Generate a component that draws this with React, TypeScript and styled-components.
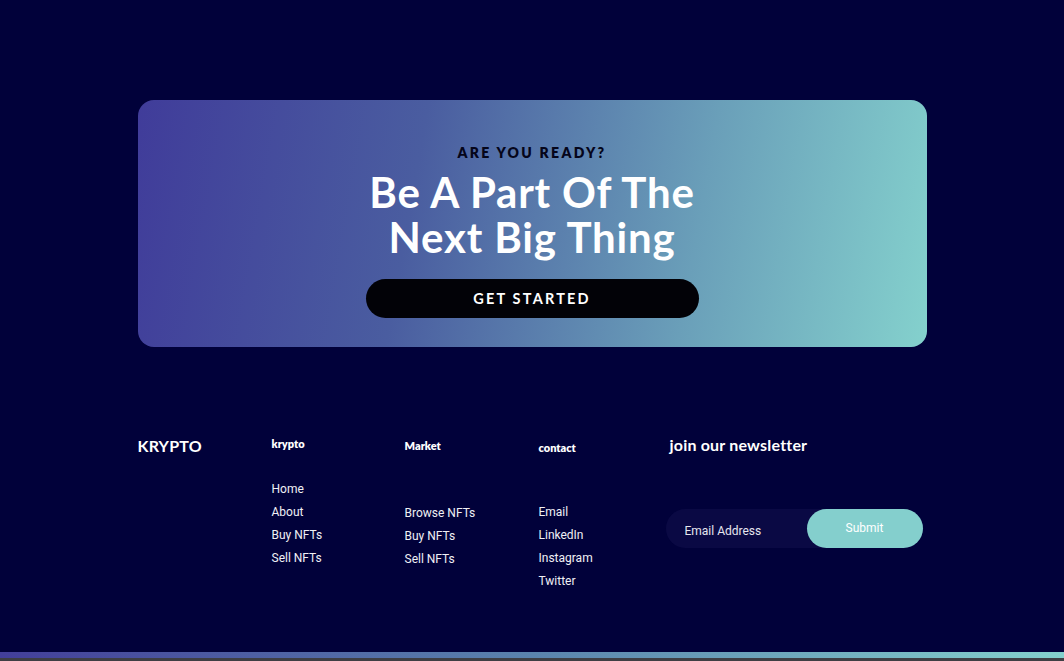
import React from "react";
import styled, { createGlobalStyle } from "styled-components";

const Global = createGlobalStyle`
  html, body { margin: 0; padding: 0; background: #01013a; }
  body { font-family: Roboto, "Liberation Sans", sans-serif; overflow: hidden; }
  * { box-sizing: border-box; }
`;

const Page = styled.div`
  width: 1064px;
  height: 661px;
  display: flex;
  flex-direction: column;
  background: #01013a;
`;

const Main = styled.main`
  flex: 1;
  width: 789px;
  margin: 0 auto;
  padding-top: 100px;
  display: flex;
  flex-direction: column;
`;

const Banner = styled.section`
  height: 247px;
  border-radius: 16px;
  background: linear-gradient(100deg, #403c9a 0%, #4a5da0 35%, #6a9fb9 70%, #84d1cd 100%);
  display: flex;
  flex-direction: column;
  align-items: center;
  padding-top: 44px;
`;

const Eyebrow = styled.p`
  margin: 0;
  font-family: Lato, "Noto Sans", sans-serif;
  font-weight: 800;
  font-size: 14px;
  letter-spacing: 2.3px;
  color: #05051a;
  line-height: 18px;
`;

const Title = styled.h1`
  margin: 8px 0 0;
  font-family: Lato, "Noto Sans", sans-serif;
  font-weight: 700;
  font-size: 42px;
  line-height: 45px;
  color: #fff;
  text-align: center;
  letter-spacing: 0.8px;
`;

const CtaButton = styled.button`
  margin-top: 19px;
  width: 333px;
  height: 39px;
  border: none;
  border-radius: 20px;
  background: #020207;
  color: #fff;
  font-family: Lato, "Noto Sans", sans-serif;
  font-weight: 700;
  font-size: 14.5px;
  letter-spacing: 2.2px;
  cursor: pointer;
`;

const Footer = styled.footer`
  margin-top: 90px;
  display: grid;
  grid-template-columns: 134px 133px 134px 131px 1fr;
  align-items: start;
`;

const Brand = styled.div`
  font-family: Lato, "Noto Sans", sans-serif;
  font-weight: 700;
  font-size: 16px;
  color: #fff;
  line-height: 18px;
  letter-spacing: 0.2px;
`;

const Col = styled.div`
  display: flex;
  flex-direction: column;
`;

const ColTitle = styled.h4<{ $offset: number }>`
  margin: ${(p) => p.$offset}px 0 0;
  font-family: Lato, "Noto Sans", sans-serif;
  font-weight: 800;
  font-size: 11px;
  line-height: 14px;
  color: #fff;
`;

const LinkList = styled.ul<{ $gap: number }>`
  list-style: none;
  margin: ${(p) => p.$gap}px 0 0;
  padding: 0;
  display: flex;
  flex-direction: column;
  gap: 9px;
`;

const LinkItem = styled.li`
  font-family: Roboto, "Liberation Sans", sans-serif;
  font-size: 12px;
  line-height: 14px;
  color: #f0f0f5;
`;

const NewsTitle = styled.h3`
  margin: 0;
  font-family: Lato, "Noto Sans", sans-serif;
  font-weight: 700;
  font-size: 16px;
  line-height: 16px;
  color: #fff;
  letter-spacing: 0.2px;
`;

const Form = styled.form`
  margin-top: 56px;
  margin-left: -4px;
  width: 257px;
  height: 39px;
  border-radius: 20px;
  background: #0a0944;
  display: flex;
  align-items: center;
`;

const EmailInput = styled.input`
  flex: 1;
  min-width: 0;
  height: 100%;
  border: none;
  background: transparent;
  padding: 4px 0 0 19px;
  font-family: Roboto, "Liberation Sans", sans-serif;
  font-size: 12px;
  color: #fff;
  outline: none;
  &::placeholder { color: #e6e6ef; opacity: 1; }
`;

const Submit = styled.button`
  width: 116px;
  height: 39px;
  border: none;
  border-radius: 20px;
  background: #84cfcd;
  color: #fff;
  font-family: Roboto, "Liberation Sans", sans-serif;
  font-size: 12px;
  padding-bottom: 2px;
`;

const BottomBar = styled.div`
  height: 6px;
  background: linear-gradient(90deg, #433f9a 0%, #5a83ad 50%, #84d1cd 100%);
`;

const Edge = styled.div`
  height: 3px;
  background: #3f3f44;
`;

const columns = [
  { title: "krypto", offset: 0, gap: 31, links: ["Home", "About", "Buy NFTs", "Sell NFTs"] },
  { title: "Market", offset: 2, gap: 53, links: ["Browse NFTs", "Buy NFTs", "Sell NFTs"] },
  { title: "contact", offset: 4, gap: 50, links: ["Email", "LinkedIn", "Instagram", "Twitter"] },
];

export default function App() {
  return (
    <Page>
      <Global />
      <Main>
        <Banner>
          <Eyebrow>ARE YOU READY?</Eyebrow>
          <Title>
            Be A Part Of The
            <br />
            Next Big Thing
          </Title>
          <CtaButton>GET STARTED</CtaButton>
        </Banner>
        <Footer>
          <Brand>KRYPTO</Brand>
          {columns.map((c) => (
            <Col key={c.title}>
              <ColTitle $offset={c.offset}>{c.title}</ColTitle>
              <LinkList $gap={c.gap}>
                {c.links.map((l) => (
                  <LinkItem key={l}>{l}</LinkItem>
                ))}
              </LinkList>
            </Col>
          ))}
          <Col>
            <NewsTitle>join our newsletter</NewsTitle>
            <Form onSubmit={(e) => e.preventDefault()}>
              <EmailInput placeholder="Email Address" />
              <Submit type="submit">Submit</Submit>
            </Form>
          </Col>
        </Footer>
      </Main>
      <BottomBar />
      <Edge />
    </Page>
  );
}
